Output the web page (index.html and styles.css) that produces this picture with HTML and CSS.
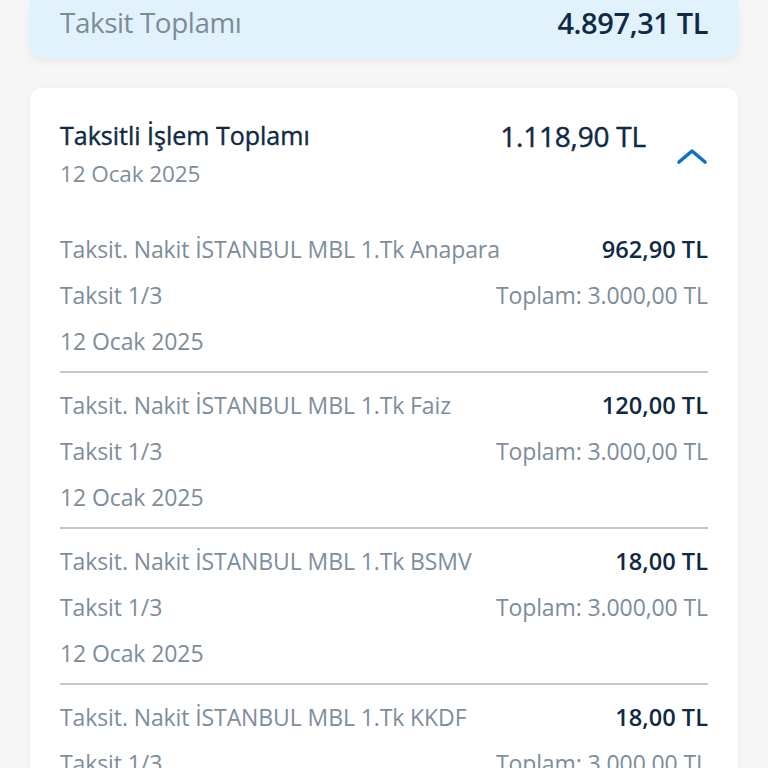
FILE: index.html
```html
<!DOCTYPE html>
<html lang="tr">
<head>
    <meta charset="UTF-8">
    <meta name="viewport" content="width=device-width, initial-scale=1.0">
    <title>Taksit Detayı</title>
    <link rel="stylesheet" href="styles.css">
</head>
<body>

    <!-- Total installment summary -->
    <div class="summaryCard">
        <span class="summaryLabel">Taksit Toplamı</span>
        <span class="summaryValue">4.897,31 TL</span>
    </div>

    <!-- Installment transaction group -->
    <div class="groupCard">
        <div class="groupHeader">
            <div class="groupInfo">
                <div class="groupTitle">Taksitli İşlem Toplamı</div>
                <div class="groupDate">12 Ocak 2025</div>
            </div>
            <div class="groupAmount">1.118,90 TL</div>
            <svg class="chevron" width="32" height="20" viewBox="0 0 32 20">
                <path d="M3 15 L16 4 L29 15" fill="none" stroke="#0a72c8" stroke-width="3.6" stroke-linecap="round" stroke-linejoin="round"/>
            </svg>
        </div>

        <div class="item">
            <div class="itemRow">
                <span class="itemName">Taksit. Nakit İSTANBUL MBL 1.Tk Anapara</span>
                <span class="itemAmount">962,90 TL</span>
            </div>
            <div class="itemRow">
                <span class="itemMuted">Taksit 1/3</span>
                <span class="itemMuted">Toplam: 3.000,00 TL</span>
            </div>
            <div class="itemRow">
                <span class="itemMuted">12 Ocak 2025</span>
            </div>
        </div>

        <div class="item">
            <div class="itemRow">
                <span class="itemName">Taksit. Nakit İSTANBUL MBL 1.Tk Faiz</span>
                <span class="itemAmount">120,00 TL</span>
            </div>
            <div class="itemRow">
                <span class="itemMuted">Taksit 1/3</span>
                <span class="itemMuted">Toplam: 3.000,00 TL</span>
            </div>
            <div class="itemRow">
                <span class="itemMuted">12 Ocak 2025</span>
            </div>
        </div>

        <div class="item">
            <div class="itemRow">
                <span class="itemName">Taksit. Nakit İSTANBUL MBL 1.Tk BSMV</span>
                <span class="itemAmount">18,00 TL</span>
            </div>
            <div class="itemRow">
                <span class="itemMuted">Taksit 1/3</span>
                <span class="itemMuted">Toplam: 3.000,00 TL</span>
            </div>
            <div class="itemRow">
                <span class="itemMuted">12 Ocak 2025</span>
            </div>
        </div>

        <div class="item">
            <div class="itemRow">
                <span class="itemName">Taksit. Nakit İSTANBUL MBL 1.Tk KKDF</span>
                <span class="itemAmount">18,00 TL</span>
            </div>
            <div class="itemRow">
                <span class="itemMuted">Taksit 1/3</span>
                <span class="itemMuted">Toplam: 3.000,00 TL</span>
            </div>
            <div class="itemRow">
                <span class="itemMuted">12 Ocak 2025</span>
            </div>
        </div>
    </div>

</body>
</html>
```

FILE: styles.css
```css
/* Page */
body {
    font-family: 'Open Sans', 'Noto Sans', sans-serif;
    margin: 0;
    padding: 0 30px;
    background: #f6f6f6;
    color: #0f2a44;
    overflow: hidden;
}

/* Top summary card */
.summaryCard {
    display: flex;
    justify-content: space-between;
    align-items: center;
    background: #e1f2fd;
    border-radius: 0 0 12px 12px;
    padding: 0 30px 14px;
    height: 44px;
    box-shadow: 0 3px 8px rgba(0, 0, 0, 0.06);
}

.summaryLabel {
    font-size: 27.8px;
    font-weight: 400;
    color: #7b8b98;
    letter-spacing: -0.4px;
}

.summaryValue {
    font-size: 29px;
    font-weight: 600;
    letter-spacing: -0.4px;
}

/* Group card */
.groupCard {
    background: #fff;
    border-radius: 12px;
    margin-top: 30px;
    padding: 28px 30px 0;
    box-shadow: 0 2px 8px rgba(0, 0, 0, 0.05);
}

.groupHeader {
    display: flex;
    align-items: flex-start;
    padding-bottom: 23px;
}

.groupInfo {
    flex: 1;
}

/* no 500 cut installed, thicken regular a little */
.groupTitle {
    font-size: 25px;
    line-height: 38px;
    -webkit-text-stroke: 0.4px currentColor;
}

.groupDate {
    font-size: 22.5px;
    color: #7f8e9b;
    line-height: 40px;
    letter-spacing: -0.1px;
}

.groupAmount {
    font-size: 28px;
    line-height: 40px;
    letter-spacing: -0.2px;
    -webkit-text-stroke: 0.45px currentColor;
}

.chevron {
    margin: 31px 0 0 30px;
}

/* Installment items */
.item {
    padding: 9px 0 7px;
}

.item + .item {
    border-top: 2px solid #c6c6c6;
}

.itemRow {
    display: flex;
    justify-content: space-between;
    align-items: center;
    height: 46px;
    font-size: 23px;
    letter-spacing: -0.1px;
}

.itemName, .itemMuted {
    color: #7d8d9b;
}

.itemAmount {
    font-size: 23.6px;
    font-weight: 600;
    letter-spacing: 0;
}
```
